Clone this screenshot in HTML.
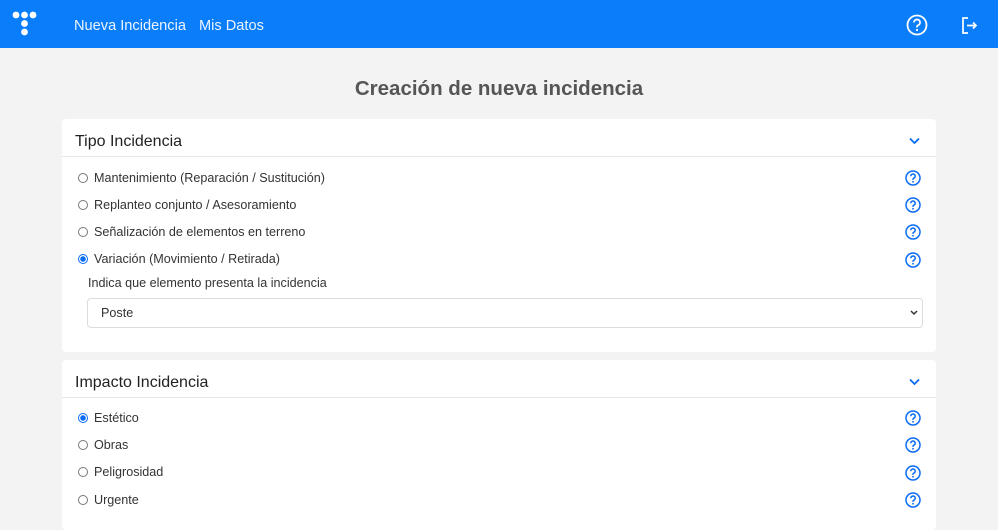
<!DOCTYPE html>
<html><head><meta charset="utf-8"><style>
*{box-sizing:border-box;margin:0;padding:0}
body{width:998px;height:523px;overflow:hidden;background:#f3f3f3;font-family:"Liberation Sans",sans-serif;color:#333;position:relative}
.nav{position:absolute;left:0;top:0;width:998px;height:48px;background:#0a7dfa}
.nav a{position:absolute;top:18px;color:#fff;font-size:14.6px;opacity:.92;white-space:nowrap}
h1{position:absolute;top:77px;left:0;width:998px;text-align:center;font-size:20.5px;font-weight:bold;color:#555}
.card{position:absolute;left:62px;width:874px;background:#fff;border-radius:4px}
.hd{position:absolute;left:13px;font-size:16px;color:#222}
.sep{position:absolute;left:0;width:874px;height:1px;background:#e8e8e8}
.chev{position:absolute;right:16px}
.opt{position:absolute;left:16px;font-size:12.6px;color:#333;height:16px;line-height:16px;white-space:nowrap}
.opt i{display:inline-block;width:10px;height:10px;border:1px solid #777;border-radius:50%;vertical-align:-1px;margin-right:6px}
.opt i.on{border:1px solid #0a6cf5;background:radial-gradient(circle,#0a6cf5 0 2.5px,#fff 3px)}
</style></head><body>
<div class="nav">
<svg style="position:absolute;left:12px;top:11px" width="26" height="26"><g fill="#fff"><circle cx="4" cy="4" r="3.4"/><circle cx="12.5" cy="4" r="3.4"/><circle cx="21" cy="4" r="3.4"/><circle cx="12.5" cy="12.5" r="3.4"/><circle cx="12.5" cy="21" r="3.4"/></g></svg>
<a style="left:74px">Nueva Incidencia</a><a style="left:199px">Mis Datos</a>
<svg style="position:absolute;left:906px;top:14px" width="22" height="22" viewBox="0 0 22 22"><circle cx="11" cy="11" r="9.5" fill="none" stroke="#fff" stroke-width="1.8"/><path d="M8 8.5a3 3 0 1 1 4 2.8c-.8.4-1 .9-1 1.7v.5" fill="none" stroke="#fff" stroke-width="1.8"/><circle cx="11" cy="16" r="1.1" fill="#fff"/></svg>
<svg style="position:absolute;left:961px;top:17px" width="18" height="17" viewBox="0 0 18 17"><path d="M7 1H2v15h5" fill="none" stroke="#fff" stroke-width="1.7"/><path d="M6 8.5h9M12 5.5l3 3-3 3" fill="none" stroke="#fff" stroke-width="1.7"/></svg>
</div>
<h1>Creación de nueva incidencia</h1>

<div class="card" style="top:119px;height:233px">
<div class="hd" style="top:14px">Tipo Incidencia</div>
<svg class="chev" style="top:18px" width="11" height="8"><path d="M1 1.5l4.5 4.5 4.5-4.5" fill="none" stroke="#0a6cf5" stroke-width="1.8"/></svg>
<div class="sep" style="top:37px"></div>
<div class="opt" style="top:51px"><i></i>Mantenimiento (Reparación / Sustitución)</div>
<div class="opt" style="top:78px"><i></i>Replanteo conjunto / Asesoramiento</div>
<div class="opt" style="top:105px"><i></i>Señalización de elementos en terreno</div>
<div class="opt" style="top:132px"><i class="on"></i>Variación (Movimiento / Retirada)</div>
<div style="position:absolute;left:26px;top:157px;font-size:12.6px;color:#333">Indica que elemento presenta la incidencia</div>
<div style="position:absolute;left:25px;top:179px;width:836px;height:30px;border:1px solid #dcdcdc;border-radius:4px;font-size:12.6px;padding:7px 13px;color:#333">Poste
<svg style="position:absolute;right:4px;top:11px" width="8" height="6"><path d="M1 1l3 3 3-3" fill="none" stroke="#333" stroke-width="1.5"/></svg></div>
</div>

<div class="card" style="top:360px;height:170px">
<div class="hd" style="top:14px">Impacto Incidencia</div>
<svg class="chev" style="top:18px" width="11" height="8"><path d="M1 1.5l4.5 4.5 4.5-4.5" fill="none" stroke="#0a6cf5" stroke-width="1.8"/></svg>
<div class="sep" style="top:37px"></div>
<div class="opt" style="top:50px"><i class="on"></i>Estético</div>
<div class="opt" style="top:77px"><i></i>Obras</div>
<div class="opt" style="top:104px"><i></i>Peligrosidad</div>
<div class="opt" style="top:132px"><i></i>Urgente</div>
</div>

<svg width="0" height="0" style="position:absolute"><defs><g id="qq"><circle cx="8" cy="8" r="7" fill="none" stroke="#0a6cf5" stroke-width="1.5"/><path d="M5.8 6.2a2.2 2.2 0 1 1 3 2c-.6.3-.8.7-.8 1.3v.4" fill="none" stroke="#0a6cf5" stroke-width="1.5"/><circle cx="8" cy="11.8" r=".9" fill="#0a6cf5"/></g></defs></svg>
<svg style="position:absolute;left:905px;top:170px" width="16" height="16"><use href="#qq"/></svg>
<svg style="position:absolute;left:905px;top:197px" width="16" height="16"><use href="#qq"/></svg>
<svg style="position:absolute;left:905px;top:224px" width="16" height="16"><use href="#qq"/></svg>
<svg style="position:absolute;left:905px;top:252px" width="16" height="16"><use href="#qq"/></svg>
<svg style="position:absolute;left:905px;top:410px" width="16" height="16"><use href="#qq"/></svg>
<svg style="position:absolute;left:905px;top:437px" width="16" height="16"><use href="#qq"/></svg>
<svg style="position:absolute;left:905px;top:465px" width="16" height="16"><use href="#qq"/></svg>
<svg style="position:absolute;left:905px;top:492px" width="16" height="16"><use href="#qq"/></svg>
</body></html>
